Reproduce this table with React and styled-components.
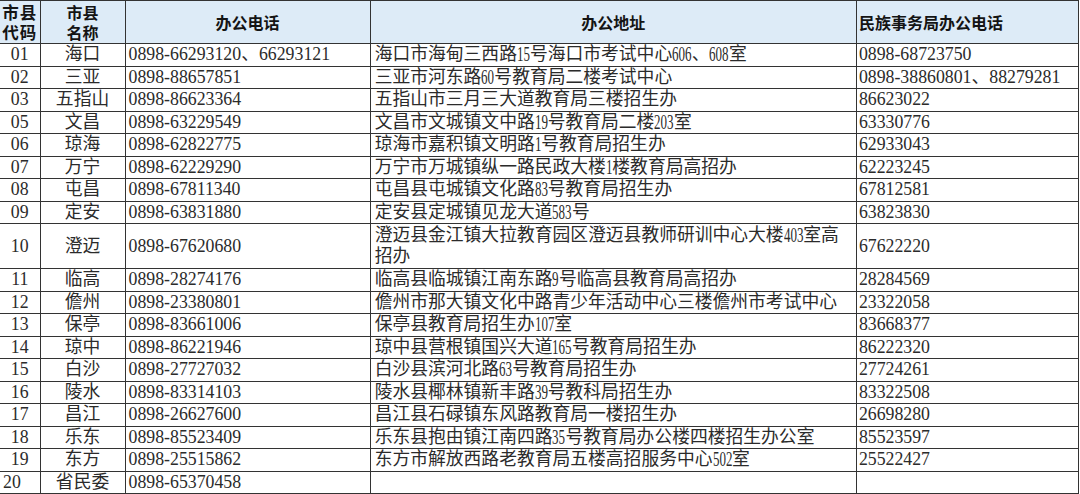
import React from 'react';
import styled, { createGlobalStyle } from 'styled-components';

const rows = [
    ['01', '海口', '0898-66293120、66293121', ['海口市海甸三西路15号海口市考试中心606、608室'], '0898-68723750'],
    ['02', '三亚', '0898-88657851', ['三亚市河东路60号教育局二楼考试中心'], '0898-38860801、88279281'],
    ['03', '五指山', '0898-86623364', ['五指山市三月三大道教育局三楼招生办'], '86623022'],
    ['05', '文昌', '0898-63229549', ['文昌市文城镇文中路19号教育局二楼203室'], '63330776'],
    ['06', '琼海', '0898-62822775', ['琼海市嘉积镇文明路1号教育局招生办'], '62933043'],
    ['07', '万宁', '0898-62229290', ['万宁市万城镇纵一路民政大楼1楼教育局高招办'], '62223245'],
    ['08', '屯昌', '0898-67811340', ['屯昌县屯城镇文化路83号教育局招生办'], '67812581'],
    ['09', '定安', '0898-63831880', ['定安县定城镇见龙大道583号'], '63823830'],
    ['10', '澄迈', '0898-67620680', ['澄迈县金江镇大拉教育园区澄迈县教师研训中心大楼403室高', '招办'], '67622220'],
    ['11', '临高', '0898-28274176', ['临高县临城镇江南东路9号临高县教育局高招办'], '28284569'],
    ['12', '儋州', '0898-23380801', ['儋州市那大镇文化中路青少年活动中心三楼儋州市考试中心'], '23322058'],
    ['13', '保亭', '0898-83661006', ['保亭县教育局招生办107室'], '83668377'],
    ['14', '琼中', '0898-86221946', ['琼中县营根镇国兴大道165号教育局招生办'], '86222320'],
    ['15', '白沙', '0898-27727032', ['白沙县滨河北路63号教育局招生办'], '27724261'],
    ['16', '陵水', '0898-83314103', ['陵水县椰林镇新丰路39号教科局招生办'], '83322508'],
    ['17', '昌江', '0898-26627600', ['昌江县石碌镇东风路教育局一楼招生办'], '26698280'],
    ['18', '乐东', '0898-85523409', ['乐东县抱由镇江南四路35号教育局办公楼四楼招生办公室'], '85523597'],
    ['19', '东方', '0898-25515862', ['东方市解放西路老教育局五楼高招服务中心502室'], '25522427'],
    ['20', '省民委', '0898-65370458', [''], ''],
];

// address digits are narrower than the phone digits in the sheet
const withNarrowDigits = (text) =>
    text.split(/(\d+)/).map((part, i) =>
        /^\d+$/.test(part)
            ? <Narrow key={i} $n={part.length}>{part}</Narrow>
            : part
    );

const App = () => {
    return (
        <>
            <GlobalStyle />
            <Sheet>
                <colgroup>
                    <col style={{ width: 40 }} />
                    <col style={{ width: 85 }} />
                    <col style={{ width: 245 }} />
                    <col style={{ width: 486 }} />
                    <col style={{ width: 222 }} />
                </colgroup>
                <thead>
                    <HeadRow>
                        <HeadCell $tight><HeadLine>市县</HeadLine><HeadLine>代码</HeadLine></HeadCell>
                        <HeadCell><HeadLine>市县</HeadLine><HeadLine>名称</HeadLine></HeadCell>
                        <HeadCell>办公电话</HeadCell>
                        <HeadCell>办公地址</HeadCell>
                        <HeadCell $left>民族事务局办公电话</HeadCell>
                    </HeadRow>
                </thead>
                <tbody>
                    {rows.map(([code, name, phone, address, ethnicPhone]) => (
                        <Row key={code} $double={address.length > 1}>
                            <CodeCell $left={code === '20'}>{code}</CodeCell>
                            <NameCell>{name}</NameCell>
                            <TextCell>{phone}</TextCell>
                            <AddressCell>
                                {address.map((line, i) => (
                                    <AddressLine key={i}>{withNarrowDigits(line)}</AddressLine>
                                ))}
                            </AddressCell>
                            <TextCell $tight>{ethnicPhone}</TextCell>
                        </Row>
                    ))}
                </tbody>
            </Sheet>
        </>
    );
};

// START: Styled Components
const GlobalStyle = createGlobalStyle`
    html, body {
        margin: 0;
        padding: 0;
        background: #ffffff;
    }
    body {
        width: 1080px;
        height: 494px;
        overflow: hidden;
    }
`;

const Sheet = styled.table`
    width: 1079px;
    table-layout: fixed;
    border-collapse: collapse;
    font-family: "Liberation Serif", "Noto Sans CJK SC", serif;
    font-size: 17.8px;
    color: #2b2b2b;
    border-top: 1px solid #333;
    border-right: 1px solid #333;
    border-bottom: 1px solid #333;
`;

const HeadRow = styled.tr`
    height: 43px;
    background: #ddebf7;
`;

const HeadCell = styled.th`
    height: 42px;
    box-sizing: border-box;
    padding: ${props => props.$tight ? '0' : '0 2px'};
    border: 1px solid #333;
    border-left: none;
    font-family: "Noto Sans CJK SC", sans-serif;
    font-weight: 700;
    font-size: ${props => props.$tight ? '16.5px' : '16px'};
    line-height: 19px;
    color: #141414;
    text-align: ${props => props.$left ? 'left' : 'center'};
    vertical-align: middle;
    white-space: nowrap;
    letter-spacing: ${props => props.$tight ? '1px' : '0'};
`;

const HeadLine = styled.div`
    height: 20px;
    line-height: 20px;
`;

const Row = styled.tr`
    height: ${props => props.$double ? '45px' : '22.5px'};
`;

const Cell = styled.td`
    padding: 0 2px 0 3px;
    border: 1px solid #333;
    border-left: none;
    line-height: 17px;
    vertical-align: middle;
    white-space: nowrap;
    overflow: hidden;
`;

const CodeCell = styled(Cell)`
    text-align: ${props => props.$left ? 'left' : 'center'};
    padding: 0 0 0 ${props => props.$left ? '3px' : '0'};
`;

const NameCell = styled(Cell)`
    text-align: center;
    padding: 0;
`;

const TextCell = styled(Cell)`
    text-align: left;
    padding-left: ${props => props.$tight ? '2px' : '3px'};
`;

const AddressCell = styled(Cell)`
    padding-left: 4px;
`;

const AddressLine = styled.div`
    display: flex;
    align-items: center;
    height: 21px;
    line-height: 17px;
`;

const Narrow = styled.span`
    display: inline-block;
    font-size: 20px;
    line-height: 17px;
    transform: scaleX(0.65);
    transform-origin: left center;
    margin-right: ${props => -props.$n * 3.5}px;
`;
// END: Styled Components

export default App;
